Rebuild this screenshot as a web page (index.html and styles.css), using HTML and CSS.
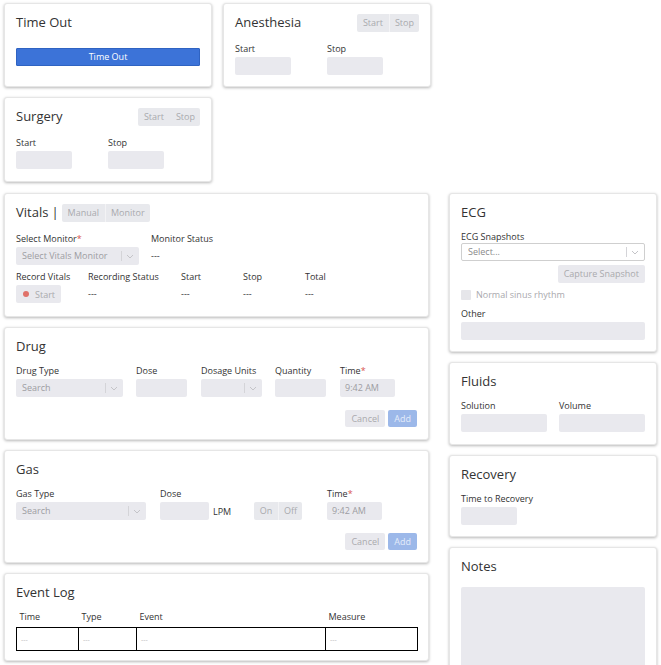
FILE: index.html
```html
<!DOCTYPE html>
<html lang="en">
<head>
    <meta charset="UTF-8">
    <meta name="viewport" content="width=device-width, initial-scale=1.0">
    <title>Procedure Record</title>
    <link rel="stylesheet" href="styles.css">
</head>
<body>
<div class="page">
    <div class="top-grid">
        <section class="card card-timeout">
            <div class="card-header">
                <h2 class="card-title">Time Out</h2>
            </div>
            <button class="btn-primary">Time Out</button>
        </section>

        <section class="card card-short">
            <div class="card-header with-toggle">
                <h2 class="card-title">Anesthesia</h2>
                <div class="toggle"><span>Start</span><span>Stop</span></div>
            </div>
            <div class="field-row cols-pair">
                <div class="field">
                    <span class="label">Start</span>
                    <div class="input w-56"></div>
                </div>
                <div class="field">
                    <span class="label">Stop</span>
                    <div class="input w-56"></div>
                </div>
            </div>
        </section>

        <section class="card card-short card-surgery">
            <div class="card-header with-toggle">
                <h2 class="card-title">Surgery</h2>
                <div class="toggle toggle-plain"><span>Start</span><span>Stop</span></div>
            </div>
            <div class="field-row cols-pair">
                <div class="field">
                    <span class="label">Start</span>
                    <div class="input w-56"></div>
                </div>
                <div class="field">
                    <span class="label">Stop</span>
                    <div class="input w-56"></div>
                </div>
            </div>
        </section>
    </div>

    <div class="main-grid">
        <div class="column">
            <section class="card card-vitals">
                <div class="card-header with-toggle start">
                    <h2 class="card-title">Vitals<span class="divider">|</span></h2>
                    <div class="toggle"><span>Manual</span><span>Monitor</span></div>
                </div>
                <div class="field-row cols-monitor">
                    <div class="field">
                        <span class="label">Select Monitor<span class="req">*</span></span>
                        <div class="input select w-123">
                            <span class="select-value">Select Vitals Monitor</span>
                            <span class="select-sep"></span>
                            <svg class="chevron" width="8" height="5" viewBox="0 0 8 5"><path d="M1 1 L4 4 L7 1" fill="none" stroke="#c4c4c8" stroke-width="1"/></svg>
                        </div>
                    </div>
                    <div class="field">
                        <span class="label">Monitor Status</span>
                        <div class="value">---</div>
                    </div>
                </div>
                <div class="field-row cols-record">
                    <div class="field">
                        <span class="label">Record Vitals</span>
                        <button class="btn btn-record"><span class="dot"></span>Start</button>
                    </div>
                    <div class="field">
                        <span class="label">Recording Status</span>
                        <div class="value">---</div>
                    </div>
                    <div class="field">
                        <span class="label">Start</span>
                        <div class="value">---</div>
                    </div>
                    <div class="field">
                        <span class="label">Stop</span>
                        <div class="value">---</div>
                    </div>
                    <div class="field">
                        <span class="label">Total</span>
                        <div class="value">---</div>
                    </div>
                </div>
            </section>

            <section class="card card-entry">
                <div class="card-header">
                    <h2 class="card-title">Drug</h2>
                </div>
                <div class="field-row cols-drug">
                    <div class="field">
                        <span class="label">Drug Type</span>
                        <div class="input select w-107">
                            <span class="select-value">Search</span>
                            <span class="select-sep"></span>
                            <svg class="chevron" width="8" height="5" viewBox="0 0 8 5"><path d="M1 1 L4 4 L7 1" fill="none" stroke="#c4c4c8" stroke-width="1"/></svg>
                        </div>
                    </div>
                    <div class="field">
                        <span class="label">Dose</span>
                        <div class="input w-51"></div>
                    </div>
                    <div class="field">
                        <span class="label">Dosage Units</span>
                        <div class="input select w-61">
                            <span class="select-value"></span>
                            <span class="select-sep"></span>
                            <svg class="chevron" width="8" height="5" viewBox="0 0 8 5"><path d="M1 1 L4 4 L7 1" fill="none" stroke="#c4c4c8" stroke-width="1"/></svg>
                        </div>
                    </div>
                    <div class="field">
                        <span class="label">Quantity</span>
                        <div class="input w-51"></div>
                    </div>
                    <div class="field">
                        <span class="label">Time<span class="req">*</span></span>
                        <div class="input w-55">9:42 AM</div>
                    </div>
                </div>
                <div class="actions">
                    <button class="btn">Cancel</button>
                    <button class="btn btn-add">Add</button>
                </div>
            </section>

            <section class="card card-entry">
                <div class="card-header">
                    <h2 class="card-title">Gas</h2>
                </div>
                <div class="field-row cols-gas">
                    <div class="field">
                        <span class="label">Gas Type</span>
                        <div class="input select w-130">
                            <span class="select-value">Search</span>
                            <span class="select-sep"></span>
                            <svg class="chevron" width="8" height="5" viewBox="0 0 8 5"><path d="M1 1 L4 4 L7 1" fill="none" stroke="#c4c4c8" stroke-width="1"/></svg>
                        </div>
                    </div>
                    <div class="field">
                        <span class="label">Dose</span>
                        <div class="inline">
                            <div class="input w-49"></div>
                            <span class="unit">LPM</span>
                        </div>
                    </div>
                    <div class="field">
                        <div class="toggle toggle-field"><span>On</span><span>Off</span></div>
                    </div>
                    <div class="field">
                        <span class="label">Time<span class="req">*</span></span>
                        <div class="input w-55">9:42 AM</div>
                    </div>
                </div>
                <div class="actions">
                    <button class="btn">Cancel</button>
                    <button class="btn btn-add">Add</button>
                </div>
            </section>

            <section class="card card-log">
                <div class="card-header">
                    <h2 class="card-title">Event Log</h2>
                </div>
                <table class="log-table">
                    <colgroup>
                        <col class="c-time"><col class="c-type"><col class="c-event"><col class="c-measure">
                    </colgroup>
                    <thead>
                        <tr><th>Time</th><th>Type</th><th>Event</th><th>Measure</th></tr>
                    </thead>
                    <tbody>
                        <tr><td>---</td><td>---</td><td>---</td><td>---</td></tr>
                    </tbody>
                </table>
            </section>
        </div>

        <div class="column">
            <section class="card card-ecg">
                <div class="card-header">
                    <h2 class="card-title">ECG</h2>
                </div>
                <span class="label tight">ECG Snapshots</span>
                <div class="input select select-light">
                    <span class="select-value">Select...</span>
                    <span class="select-sep"></span>
                    <svg class="chevron" width="8" height="5" viewBox="0 0 8 5"><path d="M1 1 L4 4 L7 1" fill="none" stroke="#c4c4c8" stroke-width="1"/></svg>
                </div>
                <div class="capture-row">
                    <button class="btn btn-capture">Capture Snapshot</button>
                </div>
                <label class="check"><span class="check-box"></span>Normal sinus rhythm</label>
                <span class="label other-label">Other</span>
                <div class="input"></div>
            </section>

            <section class="card card-fluids">
                <div class="card-header">
                    <h2 class="card-title">Fluids</h2>
                </div>
                <div class="field-row cols-fluids">
                    <div class="field">
                        <span class="label">Solution</span>
                        <div class="input w-86"></div>
                    </div>
                    <div class="field">
                        <span class="label">Volume</span>
                        <div class="input w-86"></div>
                    </div>
                </div>
            </section>

            <section class="card card-recovery">
                <div class="card-header">
                    <h2 class="card-title">Recovery</h2>
                </div>
                <span class="label">Time to Recovery</span>
                <div class="input w-56"></div>
            </section>

            <section class="card card-notes">
                <div class="card-header">
                    <h2 class="card-title">Notes</h2>
                </div>
                <div class="notes-area"></div>
            </section>
        </div>
    </div>
</div>
</body>
</html>
```

FILE: styles.css
```css
* {
    box-sizing: border-box;
}
body {
    margin: 0;
    font-family: "Open Sans", "Noto Sans", sans-serif;
    color: #333;
    background: #fff;
}
.page {
    padding: 3px 4px 20px;
}
.top-grid {
    display: grid;
    grid-template-columns: 208px 208px;
    column-gap: 11px;
    row-gap: 10px;
    margin-bottom: 11px;
}
.main-grid {
    display: grid;
    grid-template-columns: 425px 208px;
    column-gap: 20px;
    align-items: start;
}
.column {
    display: flex;
    flex-direction: column;
    gap: 10px;
}

/* cards */
.card {
    background: #fff;
    border: 1px solid #e6e6e6;
    border-radius: 3px;
    box-shadow: 0 1px 3px rgba(0, 0, 0, 0.28);
    padding: 9px 11px 11px;
}
.card-timeout, .card-short { height: 84px; }
.card-surgery { height: 85px; }
.card-vitals { height: 124px; }
.card-entry { height: 113px; }
.card-log { height: 88px; }
.card-ecg { height: 159px; }
.card-fluids { height: 83px; }
.card-recovery { height: 82px; }
.card-notes { height: 150px; }

.card-header {
    display: flex;
    justify-content: space-between;
    align-items: flex-start;
    margin-bottom: 10px;
}
.card-header.with-toggle {
    margin-bottom: 11px;
}
.card-header.start {
    justify-content: flex-start;
}
.card-title {
    margin: 0;
    font-size: 13px;
    line-height: 18px;
    font-weight: 400;
    color: #333;
}
.divider {
    margin: 0 3px;
}

/* segmented toggles */
.toggle {
    display: flex;
    margin-top: 1px;
    background: #e8e9ed;
    border-radius: 2px;
}
.toggle span {
    font-size: 9px;
    line-height: 18px;
    padding: 0 6px;
    color: #a9a9ad;
}
.toggle span + span {
    border-left: 1px solid #f3f3f5;
    padding: 0 5px;
}
.toggle-plain span + span {
    border-left-color: #e8e9ed;
}
.toggle-field {
    width: 48px;
    margin-top: 0;
}
.toggle-field span {
    width: 24px;
    padding: 0;
    text-align: center;
}
.toggle-field span + span {
    padding: 0;
}

/* fields */
.field-row {
    display: grid;
    align-items: end;
}
.field-row + .field-row {
    margin-top: 6px;
}
.cols-pair { grid-template-columns: 92px auto; }
.cols-monitor { grid-template-columns: 135px auto; }
.cols-record { grid-template-columns: 72px 93px 62px 62px auto; }
.cols-drug { grid-template-columns: 120px 65px 74px 65px auto; }
.cols-gas { grid-template-columns: 144px 94px 73px auto; }
.cols-fluids { grid-template-columns: 98px auto; }

.label {
    display: block;
    font-size: 9px;
    line-height: 12px;
    margin-bottom: 2px;
    color: #333;
    white-space: nowrap;
}
.label.tight {
    margin-bottom: 0;
}
.req {
    color: #d9534f;
}
.input {
    height: 18px;
    background: #e9e9ee;
    border-radius: 2px;
    font-size: 9px;
    line-height: 18px;
    padding: 0 5px;
    color: #9d9da2;
}
.w-49 { width: 49px; }
.w-51 { width: 51px; }
.w-55 { width: 55px; }
.w-56 { width: 56px; }
.w-61 { width: 61px; }
.w-86 { width: 86px; }
.w-107 { width: 107px; }
.w-123 { width: 123px; }
.w-130 { width: 130px; }

.select {
    display: flex;
    align-items: center;
    padding: 0 5px 0 6px;
}
.select-value {
    flex: 1;
    white-space: nowrap;
    overflow: hidden;
}
.select-sep {
    width: 1px;
    height: 10px;
    background: #d4d4d8;
    margin-right: 4px;
}
.chevron {
    display: block;
}
.select-light {
    background: #fff;
    border: 1px solid #cfcfcf;
    color: #8a8a8a;
    line-height: 16px;
}
.value {
    font-size: 9px;
    line-height: 18px;
    color: #333;
}
.inline {
    display: flex;
    align-items: center;
}
.unit {
    font-size: 9px;
    margin-left: 4px;
    color: #333;
}

/* buttons */
.btn-primary {
    display: block;
    width: 100%;
    height: 18px;
    margin-top: 17px;
    background: #3c73d8;
    border: 1px solid #2f63c2;
    border-radius: 1px;
    color: #fff;
    font-family: inherit;
    font-size: 9px;
    line-height: 16px;
    padding: 0;
}
.btn {
    height: 17px;
    padding: 0 6px;
    border: 0;
    border-radius: 2px;
    background: #e9e9ee;
    color: #a9a9ad;
    font-family: inherit;
    font-size: 9px;
    line-height: 17px;
}
.btn-add {
    background: #9cb8e9;
    color: #e4ecfa;
}
.btn-record {
    display: flex;
    align-items: center;
    height: 18px;
    width: 45px;
    padding: 0 0 0 7px;
}
.dot {
    width: 6px;
    height: 6px;
    border-radius: 50%;
    background: #e0726a;
    margin-right: 6px;
}
.actions {
    display: flex;
    justify-content: flex-end;
    gap: 3px;
    margin-top: 13px;
}

/* ecg */
.capture-row {
    display: flex;
    justify-content: flex-end;
    margin-top: 4px;
}
.btn-capture {
    height: 18px;
    line-height: 18px;
    padding: 0 6px;
}
.check {
    display: flex;
    align-items: center;
    margin-top: 6px;
    font-size: 9px;
    line-height: 12px;
    color: #a9a9ad;
}
.check-box {
    width: 10px;
    height: 10px;
    margin-right: 5px;
    background: #e6e6ea;
    border-radius: 1px;
}
.other-label {
    margin-top: 7px;
}

/* event log */
.log-table {
    width: 100%;
    border-collapse: collapse;
    table-layout: fixed;
}
.c-time { width: 62px; }
.c-type { width: 58px; }
.c-event { width: 189px; }
.c-measure { width: 92px; }
.log-table th {
    font-size: 9px;
    line-height: 12px;
    font-weight: 400;
    text-align: left;
    padding: 0 3px 4px;
}
.log-table td {
    border: 1px solid #000;
    height: 23px;
    font-size: 7px;
    color: #bbb;
    padding: 0 4px;
}

/* notes */
.notes-area {
    height: 110px;
    margin-top: 12px;
    background: #e9e9ee;
    border-radius: 2px;
}
```
